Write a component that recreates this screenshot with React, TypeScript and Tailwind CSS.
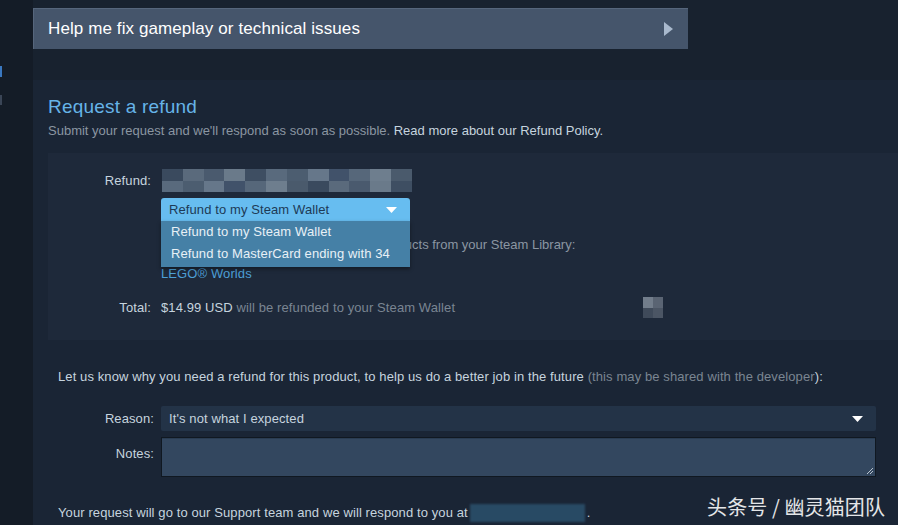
import React from "react";

const font = { fontFamily: '"Liberation Sans", Arial, sans-serif' };

function Pixel() {
  const cells = [
    "#3a4a5e","#5a6a7c","#4a5a6e","#6a7a8a","#3e4e62","#596a7d","#4c5d70","#66778a","#41526a","#56677a","#6e7e8e","#4a5a6c",
  ];
  return (
    <div className="flex h-[23px] w-[250px] overflow-hidden blur-[0.6px]">
      {cells.map((c, i) => (
        <div key={i} className="flex h-full flex-1 flex-col">
          <div className="flex-1" style={{ background: c }} />
          <div className="flex-1" style={{ background: cells[(i + 5) % cells.length] }} />
        </div>
      ))}
    </div>
  );
}

export default function App() {
  return (
    <div className="relative flex h-[525px] w-[898px] overflow-hidden bg-[#18222f] text-[13px] tracking-[0.1px] text-[#c6d4df]" style={font}>
      {/* left strip */}
      <div className="flex w-[33px] shrink-0 flex-col bg-[#141c27]">
        <div className="mt-[66px] h-[11px] w-[2px] bg-[#3a78c0]" />
        <div className="mt-[18px] h-[10px] w-[2px] bg-[#3a4556]" />
      </div>

      <div className="flex min-w-0 flex-1 flex-col">
        <div className="pt-[8px]">
          <div className="flex h-[41px] w-[655px] items-center justify-between bg-[#45556b] pl-[15px] pr-[15px] shadow-[inset_1px_1px_0_#56667c]">
            <span className="text-[17px] tracking-[0.1px] text-white">Help me fix gameplay or technical issues</span>
            <svg width="9" height="14" viewBox="0 0 9 14"><path d="M0 0 L9 7 L0 14 Z" fill="#a9b9cd" /></svg>
          </div>
        </div>

        <div className="mt-[31px] flex flex-1 flex-col bg-[#1a2535] pl-[15px]">
          <div className="pt-[15px] text-[19px] leading-[24px] tracking-[0.2px] text-[#66b4e8]">Request a refund</div>
          <div className="mt-[4px] leading-[16px] tracking-[0px] text-[#8b96a2]">
            Submit your request and we'll respond as soon as possible. <span className="text-[#c6d4df]">Read more about our Refund Policy.</span>
          </div>

          <div className="relative mt-[14px] h-[187px] bg-[#1e293a] pt-[16px]">
            <div className="flex items-center">
              <div className="w-[103px] text-right text-[#c6d4df]">Refund:</div>
              <div className="ml-[11px]"><Pixel /></div>
            </div>
            <div className="ml-[113px] mt-[6px] flex h-[23px] w-[249px] items-center justify-between rounded-t-[3px] bg-[#67bdf0] pl-[8px] pr-[13px] text-[#1d3a56]">
              <span>Refund to my Steam Wallet</span>
              <svg width="11" height="6" viewBox="0 0 11 6"><path d="M0 0 H11 L5.5 6 Z" fill="#ffffff" /></svg>
            </div>
            <div className="ml-[113px] mt-[16px] whitespace-nowrap leading-[16px] tracking-normal text-[#8b96a2]">You are requesting a refund for these products from your Steam Library:</div>
            <div className="ml-[113px] mt-[13px] leading-[16px] text-[#4d9fd6]">LEGO® Worlds</div>
            <div className="mt-[15px] flex items-center leading-[16px]">
              <div className="w-[103px] text-right">Total:</div>
              <div className="ml-[10px]">
                $14.99 USD <span className="text-[#7a8592]">will be refunded to your Steam Wallet</span>
              </div>
              <div className="ml-[188px] flex h-[21px] w-[20px] flex-col">
                <div className="flex flex-1"><div className="flex-1 bg-[#727d8b]" /><div className="flex-1 bg-[#5a6473]" /></div>
                <div className="flex flex-1"><div className="flex-1 bg-[#3f4a5a]" /><div className="flex-1 bg-[#4b5564]" /></div>
              </div>
            </div>

            {/* open dropdown list */}
            <div className="absolute left-[113px] top-[68px] w-[249px] bg-[#4580a6] pb-[2px] shadow-[0_2px_4px_rgba(0,0,0,0.4)]">
              <div className="h-[22px] pl-[10px] leading-[22px] text-[#e8f0f6]">Refund to my Steam Wallet</div>
              <div className="h-[22px] pl-[10px] leading-[22px] text-[#e8f0f6]">Refund to MasterCard ending with 34</div>
            </div>
          </div>

          <div className="ml-[10px] mt-[29px] leading-[16px]">
            Let us know why you need a refund for this product, to help us do a better job in the future <span className="text-[#7a8592]">(this may be shared with the developer</span>):
          </div>

          <div className="mt-[21px] flex items-center">
            <div className="w-[106px] text-right">Reason:</div>
            <div className="ml-[7px] flex h-[25px] w-[715px] items-center justify-between rounded-[2px] bg-[#233347] pl-[8px] pr-[13px]">
              <span>It's not what I expected</span>
              <svg width="11" height="6" viewBox="0 0 11 6"><path d="M0 0 H11 L5.5 6 Z" fill="#ffffff" /></svg>
            </div>
          </div>

          <div className="mt-[6px] flex items-start">
            <div className="w-[106px] pt-[7px] text-right">Notes:</div>
            <div className="relative ml-[7px] h-[40px] w-[715px] border border-[#101821] bg-[#33475f] shadow-[inset_0_1px_0_#2a3c52]">
              <svg className="absolute bottom-[1px] right-[1px]" width="8" height="8" viewBox="0 0 8 8">
                <path d="M7 1 L1 7 M7 4 L4 7" stroke="#b8c4d0" strokeWidth="1" />
              </svg>
            </div>
          </div>

          <div className="ml-[10px] mt-[27px] flex items-center leading-[16px]">
            <span>Your request will go to our Support team and we will respond to you at</span>
            <span className="ml-[2px] inline-block h-[18px] w-[115px] bg-[#284a64] blur-[1px]" />
            <span className="ml-[2px]">.</span>
          </div>
        </div>
      </div>

      <div className="absolute bottom-[6px] right-[13px] text-[20px] leading-[24px] text-[#e4e6e8]" style={{ fontFamily: '"Noto Sans CJK SC", sans-serif' }}>
        头条号 / 幽灵猫团队
      </div>
    </div>
  );
}
